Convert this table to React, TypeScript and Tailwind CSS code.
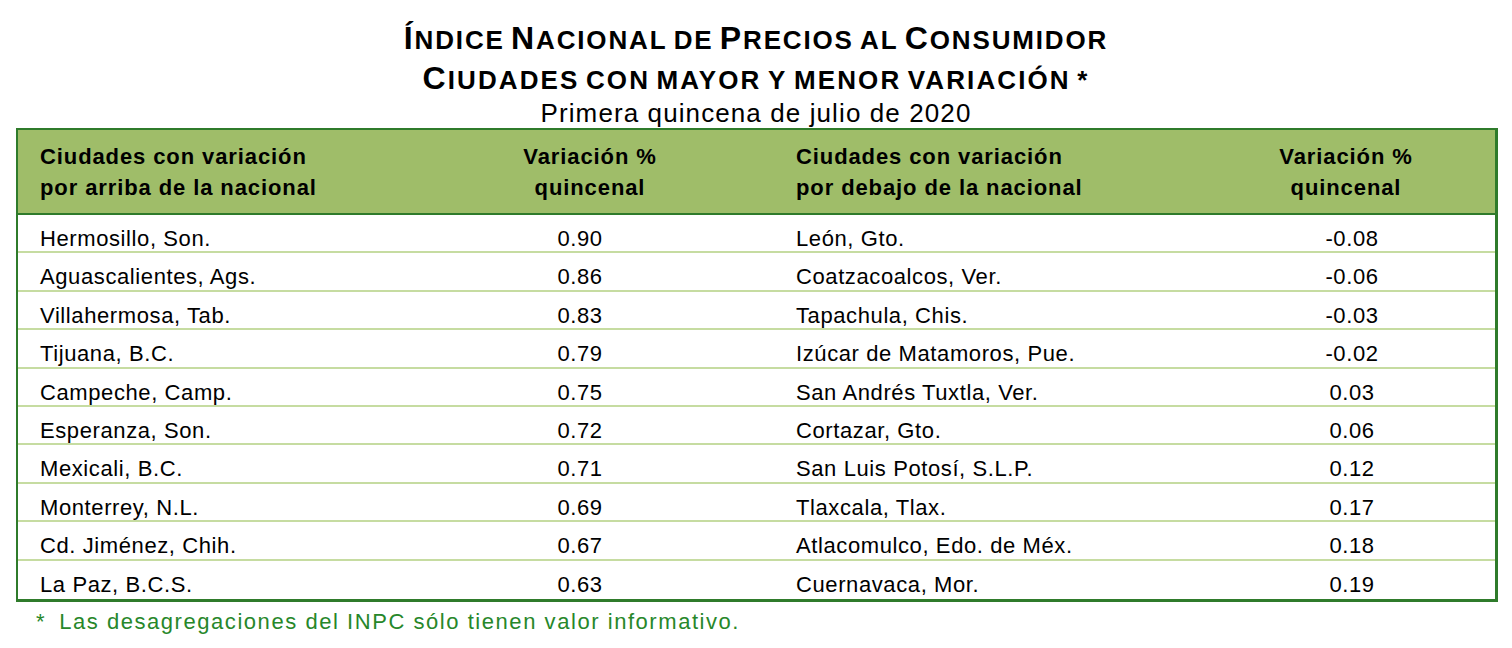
const rows: [string, string, string, string][] = [
  ["Hermosillo, Son.", "0.90", "León, Gto.", "-0.08"],
  ["Aguascalientes, Ags.", "0.86", "Coatzacoalcos, Ver.", "-0.06"],
  ["Villahermosa, Tab.", "0.83", "Tapachula, Chis.", "-0.03"],
  ["Tijuana, B.C.", "0.79", "Izúcar de Matamoros, Pue.", "-0.02"],
  ["Campeche, Camp.", "0.75", "San Andrés Tuxtla, Ver.", "0.03"],
  ["Esperanza, Son.", "0.72", "Cortazar, Gto.", "0.06"],
  ["Mexicali, B.C.", "0.71", "San Luis Potosí, S.L.P.", "0.12"],
  ["Monterrey, N.L.", "0.69", "Tlaxcala, Tlax.", "0.17"],
  ["Cd. Jiménez, Chih.", "0.67", "Atlacomulco, Edo. de Méx.", "0.18"],
  ["La Paz, B.C.S.", "0.63", "Cuernavaca, Mor.", "0.19"],
]

// small caps title line: first letter of each capitalised word bigger
function SmallCaps({ words }: { words: string[] }) {
  return (
    <>
      {words.map((w, i) => {
        const big = /[A-ZÍ]/.test(w[0])
        return (
          <span key={i}>
            {i > 0 && " "}
            {big ? (
              <>
                <span className="text-[32px]">{w[0]}</span>
                <span className="text-[26px] uppercase">{w.slice(1)}</span>
              </>
            ) : (
              <span className="text-[26px] uppercase">{w}</span>
            )}
          </span>
        )
      })}
    </>
  )
}

export default function App() {
  return (
    <div className="w-[1512px] h-[648px] bg-white text-black font-['Liberation_Sans',Arial,sans-serif] overflow-hidden">
      <div className="h-[128px] flex flex-col items-center pt-[20px]">
        <p className="h-[36px] font-bold leading-[36px] tracking-[1.85px]">
          <SmallCaps words={["Índice", "Nacional", "de", "Precios", "al", "Consumidor"]} />
        </p>
        <p className="h-[40px] font-bold leading-[40px] mt-[2px] tracking-[2.1px]">
          <SmallCaps words={["Ciudades", "con", "mayor", "y", "menor", "variación", "*"]} />
        </p>
        <p className="h-[30px] text-[26px] leading-[30px] tracking-[1.1px]">Primera quincena de julio de 2020</p>
      </div>

      <div className="ml-[16px] w-[1482px] border-t-[2px] border-l-[2px] border-r-[3px] border-b-[3px] border-[#2f7b2b]">
        <div className="grid grid-cols-[390px_364px_431px_1fr] h-[85px] bg-[#9fbd69] border-b-[2px] border-[#2f7b2b] font-bold text-[22px] leading-[31px] tracking-[0.9px] items-center">
          <div className="pl-[22px]">
            <p>Ciudades con variación</p>
            <p>por arriba de la nacional</p>
          </div>
          <div className="text-center">
            <p>Variación %</p>
            <p>quincenal</p>
          </div>
          <div className="pl-[24px]">
            <p>Ciudades con variación</p>
            <p>por debajo de la nacional</p>
          </div>
          <div className="text-center pr-[6px]">
            <p>Variación %</p>
            <p>quincenal</p>
          </div>
        </div>
        {rows.map((r, i) => (
          <div
            key={i}
            className={`grid grid-cols-[390px_364px_431px_1fr] h-[38.4px] pt-[7px] items-center text-[22px] tracking-[0.6px] ${
              i < rows.length - 1 ? "border-b-[2px] border-[#c6dca1]" : ""
            }`}
          >
            <div className="pl-[22px]">{r[0]}</div>
            <div className="text-center pr-[20px]">{r[1]}</div>
            <div className="pl-[24px]">{r[2]}</div>
            <div className="text-center pl-[6px]">{r[3]}</div>
          </div>
        ))}
      </div>

      <p className="pl-[36px] mt-[5px] text-[22px] leading-[30px] tracking-[1.55px] text-[#27872a]">
        <span className="mr-[13px]">*</span>Las desagregaciones del INPC sólo tienen valor informativo.
      </p>
    </div>
  )
}
